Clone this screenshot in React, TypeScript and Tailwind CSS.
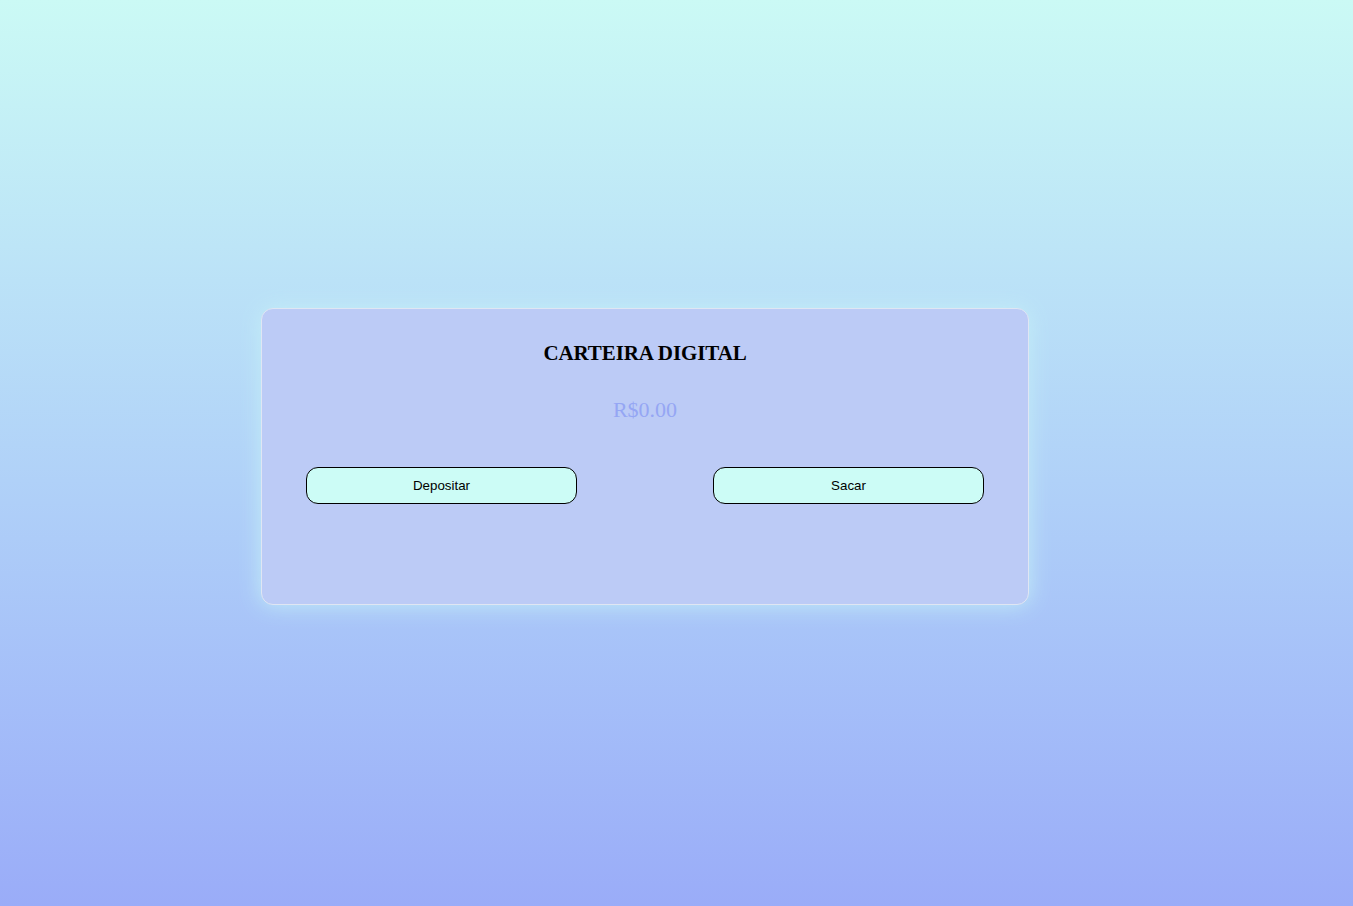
import { useState } from "react";

function App() {
  const [saldo, setSaldo] = useState(0);

  return (
    <div className="flex min-h-screen items-center justify-center bg-linear-to-b from-[#cbfaf5] to-[#9aacf8] pr-[63px] pt-[7px]">
      <div className="flex h-[297px] w-[768px] flex-col items-center rounded-[12px] border border-[#dfe6f3] bg-[#bccbf6] px-[44px] pt-[34px] shadow-[0_0_22px_#c3eef7]">
        <h1 className="font-['Liberation_Serif',serif] text-[21px] leading-none font-bold tracking-[-0.1px] text-black">
          CARTEIRA DIGITAL
        </h1>
        <p className="mt-[35px] font-['Liberation_Serif',serif] text-[22px] leading-none text-[#95a6f4]">
          R${saldo.toFixed(2)}
        </p>
        <div className="mt-[46px] flex w-full justify-between">
          <button
            className="h-[37px] w-[271px] rounded-[12px] border border-black bg-[#ccfcf6] font-['Liberation_Sans',sans-serif] text-[13.33px] text-black"
            onClick={() => setSaldo((s) => s)}
          >
            Depositar
          </button>
          <button
            className="h-[37px] w-[271px] rounded-[12px] border border-black bg-[#ccfcf6] font-['Liberation_Sans',sans-serif] text-[13.33px] text-black"
            onClick={() => setSaldo((s) => s)}
          >
            Sacar
          </button>
        </div>
      </div>
    </div>
  );
}

export default App;
